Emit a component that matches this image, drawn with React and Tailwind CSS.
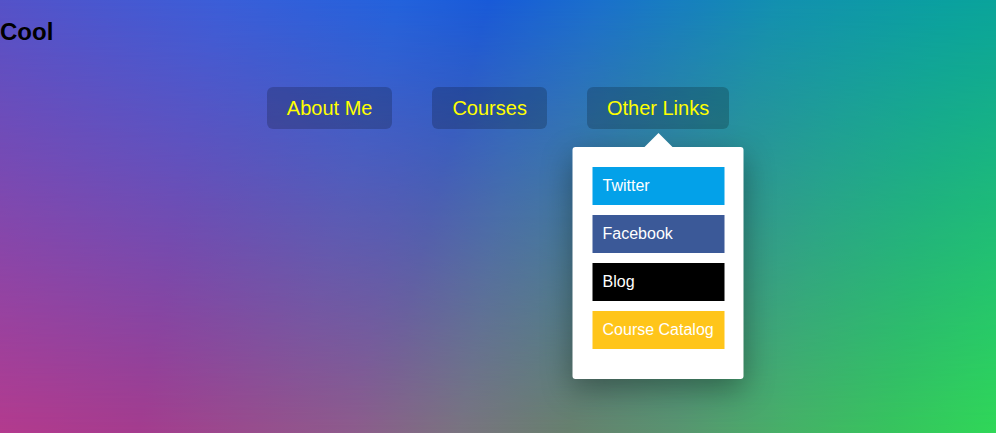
import React from 'react';

const links = [
  { label: 'Twitter', cls: 'bg-[#03a1e9]' },
  { label: 'Facebook', cls: 'bg-[#3b5998]' },
  { label: 'Blog', cls: 'bg-black' },
  { label: 'Course Catalog', cls: 'bg-[#ffc51a]' },
];

const NavButton = ({ children, open }) => (
  <div className="relative">
    <button className="h-[42px] px-5 rounded-md bg-black/20 text-[20px] leading-none text-[#ffff00]">
      {children}
    </button>
    {open && (
      <div className="absolute left-1/2 top-[60px] -translate-x-1/2 z-10">
        {/* arrow */}
        <div className="absolute left-1/2 -top-[14px] -translate-x-1/2 w-0 h-0 border-x-[14px] border-x-transparent border-b-[14px] border-b-white" />
        <div className="w-[171px] bg-white rounded-[3px] pt-5 px-5 pb-[30px] flex flex-col gap-[10px] shadow-[0_10px_30px_rgba(0,0,0,0.35)]">
          {links.map((l) => (
            <a key={l.label} className={`h-[38px] w-[132px] flex items-center pl-[10px] text-[16px] text-white whitespace-nowrap ${l.cls}`}>
              {l.label}
            </a>
          ))}
        </div>
      </div>
    )}
  </div>
);

export default function App() {
  return (
    <div className="relative w-[996px] h-[433px] overflow-hidden font-['Liberation_Sans',Arial,sans-serif] bg-[linear-gradient(100deg,#bc3a8e_0%,#a53c8e_20%,#8e5c8c_40%,#7a7480_50%,#68806e_60%,#5a9470_70%,#48b068_80%,#38c45e_90%,#30d858_100%)]">
      {/* top colour band, faded out toward the bottom */}
      <div className="absolute inset-0 bg-[linear-gradient(105deg,#5452c8_0%,#3a5ed8_20%,#2262dc_36%,#185ad8_44%,#1a70cc_54%,#1290b0_70%,#0aa0a0_85%,#0aac90_100%)] [mask-image:linear-gradient(to_bottom,#000,transparent)]" />
      <div className="relative">
        <h1 className="pt-4 text-2xl leading-8 font-bold text-black">Cool</h1>
        <nav className="mt-[39px] flex justify-center gap-10">
          <NavButton>About Me</NavButton>
          <NavButton>Courses</NavButton>
          <NavButton open>Other Links</NavButton>
        </nav>
      </div>
    </div>
  );
}
